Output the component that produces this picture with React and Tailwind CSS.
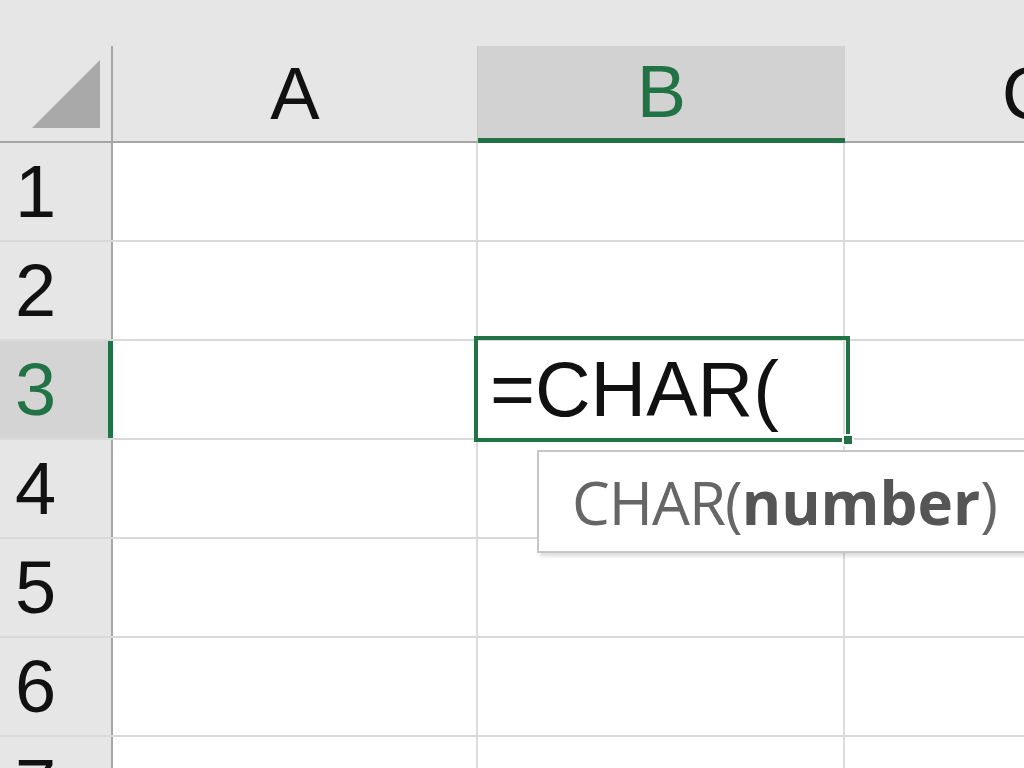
const ROWS = [1, 2, 3, 4, 5, 6, 7];

function HeaderRow() {
  return (
    <div className="flex h-[97px] bg-[#e6e6e6]">
      <div className="relative w-[113px] shrink-0 border-r-2 border-b-2 border-[#a6a6a6]">
        <svg className="absolute left-[30px] top-[12px]" width="72" height="72" viewBox="0 0 72 72">
          <polygon points="70,2 70,70 2,70" fill="#a9a9a9" />
        </svg>
      </div>
      <div className="flex w-[365px] shrink-0 items-center justify-center border-r border-b-2 border-[#c8c8c8] border-b-[#a6a6a6] text-[74px] text-[#111]">
        A
      </div>
      <div className="flex w-[367px] shrink-0 items-center justify-center border-b-[5px] border-[#217346] bg-[#d2d2d2] text-[74px] text-[#217346]">
        B
      </div>
      <div className="flex w-[367px] shrink-0 items-center justify-center border-b-2 border-[#a6a6a6] text-[74px] text-[#111]">
        C
      </div>
    </div>
  );
}

function Row({ n }) {
  const active = n === 3;
  return (
    <div className="flex h-[99px] border-b-2 border-[#d9d9d9]">
      <div
        className={
          active
            ? "flex w-[113px] shrink-0 items-center border-r-[5px] border-[#217346] bg-[#d4d4d4] pl-[15px] text-[74px] text-[#217346]"
            : "flex w-[113px] shrink-0 items-center border-r-2 border-[#a6a6a6] bg-[#e6e6e6] pl-[15px] text-[74px] text-[#111]"
        }
      >
        {n}
      </div>
      <div className="w-[365px] shrink-0 border-r-2 border-[#dcdcdc] bg-white" />
      <div className="w-[367px] shrink-0 border-r-2 border-[#dcdcdc] bg-white" />
      <div className="w-[367px] shrink-0 bg-white" />
    </div>
  );
}

export default function App() {
  return (
    <div className="relative h-[768px] w-[1024px] overflow-hidden bg-[#e6e6e6] font-['Liberation_Sans',Arial,sans-serif] leading-none">
      <div className="h-[46px] bg-[#e6e6e6]" />
      <HeaderRow />
      {ROWS.map((n) => (
        <Row key={n} n={n} />
      ))}

      {/* active cell B3 */}
      <div className="absolute left-[474px] top-[336px] flex h-[106px] w-[376px] items-center border-[4px] border-[#217346] pl-[12px] text-[77px] text-[#111]">
        =CHAR(
        <div className="absolute -bottom-[8px] -right-[8px] h-[12px] w-[12px] border-2 border-white bg-[#217346]" />
      </div>

      {/* function tooltip */}
      <div className="absolute left-[537px] top-[450px] flex h-[103px] w-[520px] items-center border-2 border-[#c6c6c6] bg-white pl-[33px] font-['Open_Sans',sans-serif] text-[60px] text-[#666] shadow-[3px_3px_4px_rgba(0,0,0,0.15)]">
        <span className="tracking-[-1px]">CHAR(</span>
        <span className="font-bold text-[#555]">number</span>
        <span>)</span>
      </div>
    </div>
  );
}
